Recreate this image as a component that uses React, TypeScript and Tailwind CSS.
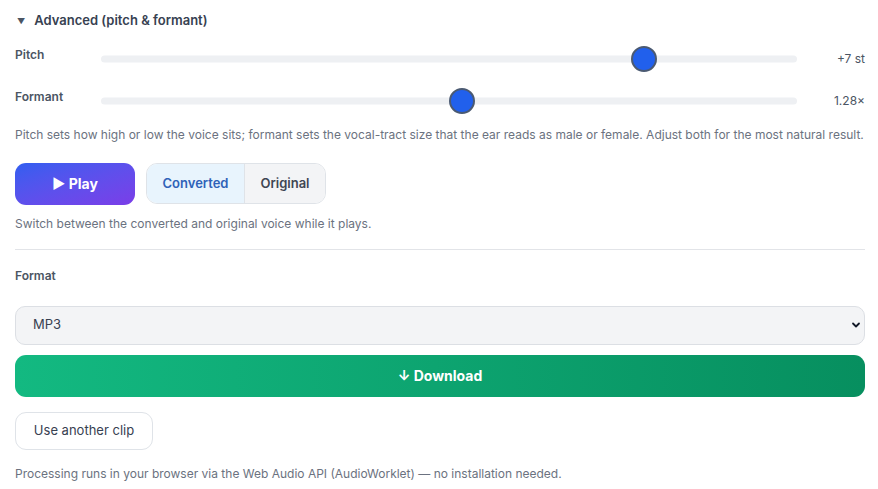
import { useState } from "react";

type SliderRow = { label: string; min: number; max: number; value: number; display: string };

const rows: SliderRow[] = [
  { label: "Pitch", min: -12, max: 12, value: 7, display: "+7 st" },
  { label: "Formant", min: 0.5, max: 2, value: 1.28, display: "1.28×" },
];

function Slider({ min, max, value }: { min: number; max: number; value: number }) {
  const pct = (value - min) / (max - min);
  return (
    <div className="relative h-[26px] flex-1">
      <div className="absolute inset-x-0 top-1/2 h-[7px] -translate-y-1/2 rounded-full bg-[#eef0f3]" />
      <div
        className="absolute top-0 h-[26px] w-[26px] rounded-full border-2 border-[#4b5a72] bg-[#2160ec]"
        style={{ left: `calc((100% - 26px) * ${pct})` }}
      />
    </div>
  );
}

export default function App() {
  const [source, setSource] = useState<"converted" | "original">("converted");
  return (
    <div className="min-h-screen bg-white pl-[15px] pr-[13px] pt-[11px] font-['Inter',sans-serif] text-[#374151]">
      <div className="flex items-center gap-[9px] pl-[2px] text-[13px] font-semibold text-[#374151]">
        <span className="text-[8px] text-[#4b5563]">▼</span>
        <span>Advanced (pitch &amp; formant)</span>
      </div>

      <div className="mt-[15px] flex flex-col gap-[16px]">
        {rows.map((r) => (
          <div key={r.label} className="flex items-center">
            <span className="w-[86px] -translate-y-[4px] text-[12px] font-semibold text-[#4b5563]">{r.label}</span>
            <Slider min={r.min} max={r.max} value={r.value} />
            <span className="w-[68px] text-right text-[12px] text-[#4b5563]">{r.display}</span>
          </div>
        ))}
      </div>

      <p className="mt-[12px] text-[12px] text-[#6b7280]">
        Pitch sets how high or low the voice sits; formant sets the vocal-tract size that the ear reads as male or female. Adjust both for the most natural result.
      </p>

      <div className="mt-[19px] flex items-center gap-[11px]">
        <button className="h-[42px] w-[120px] rounded-[11px] bg-gradient-to-br from-[#2f5ef0] to-[#7a3de8] text-[14px] font-bold text-white">
          ▶ Play
        </button>
        <div className="flex h-[41px] overflow-hidden rounded-[11px] border border-[#dfe3e8] text-[13px] font-semibold">
          <button
            onClick={() => setSource("converted")}
            className={`w-[97px] ${source === "converted" ? "bg-[#e8f4fd] text-[#2f62b8]" : "bg-[#f3f4f6] text-[#374151]"}`}
          >
            Converted
          </button>
          <button
            onClick={() => setSource("original")}
            className={`w-[81px] border-l border-[#dfe3e8] ${source === "original" ? "bg-[#e8f4fd] text-[#2f62b8]" : "bg-[#f3f4f6] text-[#3f4653]"}`}
          >
            Original
          </button>
        </div>
      </div>

      <p className="mt-[10px] text-[12px] text-[#6b7280]">Switch between the converted and original voice while it plays.</p>

      <hr className="mt-[16px] border-t border-[#e2e4e8]" />

      <div className="mt-[17px] text-[12px] font-semibold text-[#4b5563]">Format</div>

      <div className="relative mt-[21px]">
        <select className="h-[39px] w-full appearance-none rounded-[10px] border border-[#dcdfe4] bg-[#f3f4f6] pl-[17px] text-[13px] text-[#374151] outline-none">
          <option>MP3</option>
          <option>WAV</option>
        </select>
        <svg className="pointer-events-none absolute right-[4px] top-1/2 -translate-y-1/2" width="10" height="10" viewBox="0 0 10 10">
          <path d="M2 3.5 5 6.5 8 3.5" fill="none" stroke="#111827" strokeWidth="1.8" strokeLinecap="round" strokeLinejoin="round" />
        </svg>
      </div>

      <button className="mt-[10px] h-[42px] w-full rounded-[11px] bg-gradient-to-r from-[#13b981] to-[#078f5f] text-[14px] font-bold text-white">
        ↓ Download
      </button>

      <button className="mt-[15px] h-[38px] w-[138px] rounded-[11px] border border-[#dfe3e8] bg-white text-[13px] text-[#374151]">
        Use another clip
      </button>

      <p className="mt-[15px] text-[12px] text-[#6b7280]">
        Processing runs in your browser via the Web Audio API (AudioWorklet) — no installation needed.
      </p>
    </div>
  );
}
